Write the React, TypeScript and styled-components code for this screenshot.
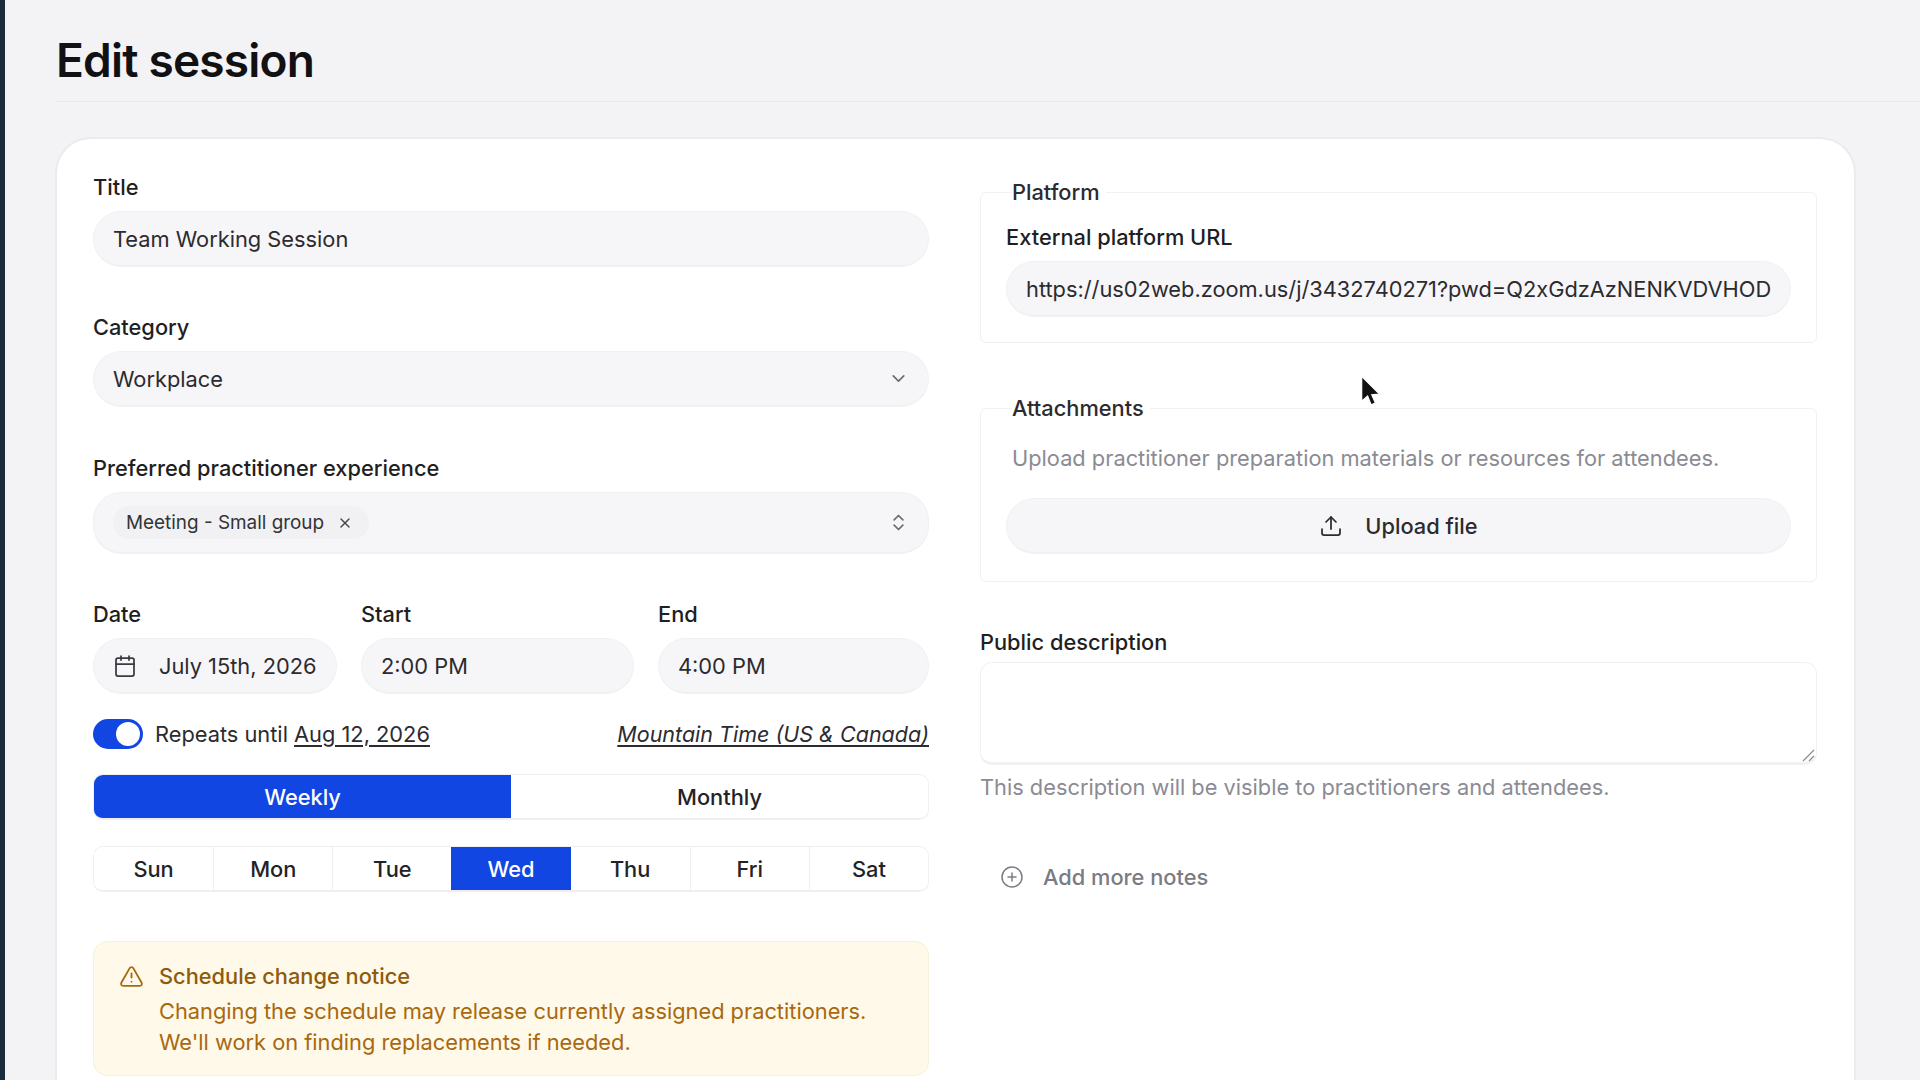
import styled, { createGlobalStyle } from 'styled-components';
import { Calendar, ChevronDown, ChevronsUpDown, CirclePlus, TriangleAlert, Upload, X } from 'lucide-react';

const GlobalStyle = createGlobalStyle`
  html, body {
    margin: 0;
    height: 100%;
    overflow: hidden;
    background: #f3f2f5;
    font-family: Inter, "Liberation Sans", sans-serif;
    color: #1b1b1f;
  }
  * { box-sizing: border-box; }
`;

const Shell = styled.div`
  display: flex;
  width: 1920px;
  height: 1080px;
  overflow: hidden;
  position: relative;
`;

const SideEdge = styled.div`
  flex: none;
  width: 5px;
  background: #1a2c3c;
`;

const Main = styled.main`
  flex: 1;
  padding: 0 0 0 50px;
  min-width: 0;
`;

const Header = styled.header`
  height: 102px;
  padding: 32px 0 0 1px;
  border-bottom: 1px solid #e9e8ec;
`;

const PageTitle = styled.h1`
  margin: 0;
  font-size: 46px;
  line-height: 56px;
  font-weight: 600;
  letter-spacing: -0.8px;
  color: #111114;
`;

const Card = styled.section`
  display: grid;
  grid-template-columns: 836px 837px;
  column-gap: 51px;
  width: 1801px;
  height: 1100px;
  margin-top: 35px;
  padding: 36px 37px 0 36px;
  background: #fff;
  border: 2px solid #ebeaee;
  border-bottom: 0;
  border-radius: 36px 36px 0 0;
`;

const Column = styled.div<{ $pt?: number }>`
  display: flex;
  flex-direction: column;
  padding-top: ${(p) => p.$pt ?? 0}px;
`;

const Field = styled.div<{ $gap?: number }>`
  display: flex;
  flex-direction: column;
  margin-bottom: ${(p) => p.$gap ?? 0}px;
`;

const Label = styled.label<{ $mb?: number }>`
  display: block;
  height: 25px;
  margin-bottom: ${(p) => p.$mb ?? 11}px;
  font-size: 21.8px;
  line-height: 25px;
  font-weight: 500;
  color: #1f1f23;
`;

const Pill = styled.div<{ $h?: number; $center?: boolean; $mt?: number }>`
  display: flex;
  align-items: center;
  justify-content: ${(p) => (p.$center ? 'center' : 'space-between')};
  height: ${(p) => p.$h ?? 56}px;
  margin-top: ${(p) => p.$mt ?? 0}px;
  padding: 0 19px;
  background: #f6f5f8;
  border: 1px solid #f1f0f3;
  border-bottom-width: 2px;
  border-radius: 28px;
  font-size: 21.8px;
  white-space: nowrap;
  overflow: hidden;
  color: #2b2b30;
`;

const Chip = styled.span`
  display: inline-flex;
  align-items: center;
  gap: 13px;
  height: 33px;
  padding: 0 16px 0 13px;
  background: #f1f0f3;
  border-radius: 17px;
  font-size: 18.9px;
  color: #333338;
`;

const TimeRow = styled.div`
  display: grid;
  grid-template-columns: 244px 273px 271px;
  column-gap: 24px;
  margin-bottom: 25px;
`;

const DateText = styled.span`
  margin-left: 22px;
`;

const PillStart = styled.span`
  display: inline-flex;
  align-items: center;
`;

const RepeatRow = styled.div`
  display: flex;
  align-items: center;
  justify-content: space-between;
  height: 30px;
  margin-bottom: 25px;
  font-size: 21.8px;
  color: #2b2b30;
`;

const ToggleWrap = styled.div`
  display: flex;
  align-items: center;
  gap: 12px;
`;

const Toggle = styled.span`
  position: relative;
  display: block;
  width: 50px;
  height: 30px;
  background: #1146e3;
  border-radius: 15px;

  &::after {
    content: '';
    position: absolute;
    right: 3px;
    top: 3px;
    width: 24px;
    height: 24px;
    background: #fff;
    border-radius: 50%;
  }
`;

const DateLink = styled.span`
  text-decoration: underline;
  text-underline-offset: 3px;
`;

const ZoneLink = styled(DateLink)`
  font-style: italic;
  font-size: 21.5px;
`;

const Segments = styled.div<{ $count: number; $gap: number }>`
  display: grid;
  grid-template-columns: repeat(${(p) => p.$count}, 1fr);
  height: 46px;
  margin-bottom: ${(p) => p.$gap}px;
  border: 1px solid #efeef1;
  border-bottom-width: 2px;
  border-radius: 10px;
  overflow: hidden;
`;

const Segment = styled.div<{ $active?: boolean; $divided?: boolean }>`
  display: flex;
  align-items: center;
  justify-content: center;
  font-size: 21.8px;
  font-weight: 500;
  background: ${(p) => (p.$active ? '#1146e3' : '#fff')};
  color: ${(p) => (p.$active ? '#fff' : '#232327')};
  border-left: ${(p) => (p.$divided ? '1px solid #efeef1' : '0')};
`;

const Notice = styled.aside`
  display: flex;
  gap: 15px;
  height: 135px;
  padding: 19px 25px;
  background: #fef9e8;
  border: 1px solid #f6f1de;
  border-radius: 14px;
  color: #a8680f;
  font-size: 21.8px;
  line-height: 31.5px;
`;

const NoticeIcon = styled.span`
  flex: none;
  height: 31px;
  display: flex;
  align-items: center;
`;

const NoticeTitle = styled.div`
  font-weight: 500;
  color: #8f5a0c;
  margin-bottom: 3px;
`;

const Group = styled.fieldset<{ $h: number; $gap: number; $pt: number }>`
  height: ${(p) => p.$h}px;
  margin: 0 0 ${(p) => p.$gap}px;
  padding: ${(p) => p.$pt}px 25px 0 25px;
  border: 1px solid #f1f0f3;
  border-radius: 6px;
  min-width: 0;
`;

const Legend = styled.legend`
  margin-left: 6px;
  padding: 0 6px 0 0;
  font-size: 21.8px;
  line-height: 25px;
  font-weight: 500;
  color: #2b2b30;
`;

const Hint = styled.p<{ $indent?: number }>`
  margin: 0;
  padding-left: ${(p) => p.$indent ?? 0}px;
  font-size: 21.8px;
  line-height: 26px;
  color: #8b8b93;
`;

const UploadLabel = styled.span`
  margin-left: 22px;
  font-weight: 500;
`;

const TextArea = styled.div`
  position: relative;
  height: 103px;
  margin-bottom: 9px;
  background: #fff;
  border: 1px solid #f1f0f3;
  border-bottom: 3px solid #f1f0f3;
  border-radius: 12px;
`;

const Grip = styled.svg`
  position: absolute;
  right: 1px;
  bottom: 0;
`;

const AddNotes = styled.div`
  display: flex;
  align-items: center;
  gap: 19px;
  margin: 64px 0 0 20px;
  font-size: 21.8px;
  font-weight: 500;
  color: #7b7b84;
`;

const Cursor = styled.svg`
  position: absolute;
  left: 1358px;
  top: 374px;
`;

const days = ['Sun', 'Mon', 'Tue', 'Wed', 'Thu', 'Fri', 'Sat'];

export default function App() {
  return (
    <Shell>
      <GlobalStyle />
      <SideEdge />
      <Main>
        <Header>
          <PageTitle>Edit session</PageTitle>
        </Header>
        <Card>
          <Column>
            <Field $gap={48}>
              <Label>Title</Label>
              <Pill>Team Working Session</Pill>
            </Field>
            <Field $gap={49}>
              <Label>Category</Label>
              <Pill>
                Workplace
                <ChevronDown size={21} color="#6d6d75" />
              </Pill>
            </Field>
            <Field $gap={48}>
              <Label>Preferred practitioner experience</Label>
              <Pill $h={62}>
                <Chip>
                  Meeting - Small group
                  <X size={16} color="#44444a" />
                </Chip>
                <ChevronsUpDown size={21} color="#6d6d75" />
              </Pill>
            </Field>
            <TimeRow>
              <Field>
                <Label>Date</Label>
                <Pill>
                  <PillStart>
                    <Calendar size={24} color="#3a3a40" strokeWidth={1.75} />
                    <DateText>July 15th, 2026</DateText>
                  </PillStart>
                </Pill>
              </Field>
              <Field>
                <Label>Start</Label>
                <Pill>2:00 PM</Pill>
              </Field>
              <Field>
                <Label>End</Label>
                <Pill>4:00 PM</Pill>
              </Field>
            </TimeRow>
            <RepeatRow>
              <ToggleWrap>
                <Toggle />
                <span>
                  Repeats until <DateLink>Aug 12, 2026</DateLink>
                </span>
              </ToggleWrap>
              <ZoneLink>Mountain Time (US &amp; Canada)</ZoneLink>
            </RepeatRow>
            <Segments $count={2} $gap={26}>
              <Segment $active>Weekly</Segment>
              <Segment>Monthly</Segment>
            </Segments>
            <Segments $count={7} $gap={49}>
              {days.map((d, i) => (
                <Segment key={d} $active={d === 'Wed'} $divided={i > 0 && d !== 'Wed' && d !== 'Thu'}>
                  {d}
                </Segment>
              ))}
            </Segments>
            <Notice>
              <NoticeIcon>
                <TriangleAlert size={25} color="#a8680f" strokeWidth={1.75} />
              </NoticeIcon>
              <div>
                <NoticeTitle>Schedule change notice</NoticeTitle>
                Changing the schedule may release currently assigned practitioners.
                <br />
                We&apos;ll work on finding replacements if needed.
              </div>
            </Notice>
          </Column>
          <Column $pt={5}>
            <Group $h={163} $gap={53} $pt={20}>
              <Legend>Platform</Legend>
              <Label $mb={11}>External platform URL</Label>
              <Pill>
                <span>https://us02web.zoom.us/j/3432740271?pwd=Q2xGdzAzNENKVDVHOD</span>
              </Pill>
            </Group>
            <Group $h={186} $gap={48} $pt={24}>
              <Legend>Attachments</Legend>
              <Hint $indent={6}>Upload practitioner preparation materials or resources for attendees.</Hint>
              <Pill $center $mt={27}>
                <Upload size={24} color="#2b2b30" strokeWidth={1.75} />
                <UploadLabel>Upload file</UploadLabel>
              </Pill>
            </Group>
            <Field>
              <Label $mb={7}>Public description</Label>
              <TextArea>
                <Grip width="14" height="14" viewBox="0 0 14 14">
                  <path d="M2 13 L13 2 M8 13 L13 8" stroke="#8b8b93" strokeWidth="1.2" fill="none" />
                </Grip>
              </TextArea>
              <Hint>This description will be visible to practitioners and attendees.</Hint>
            </Field>
            <AddNotes>
              <CirclePlus size={24} color="#7b7b84" strokeWidth={1.5} />
              Add more notes
            </AddNotes>
          </Column>
        </Card>
      </Main>
      <Cursor width="24" height="38" viewBox="0 0 20 32">
        <path d="M3 2 L3 23 L8 18.5 L11 26 L14.5 24.5 L11.5 17.5 L18 17 Z" fill="#111" stroke="#fff" strokeWidth="1" />
      </Cursor>
    </Shell>
  );
}
